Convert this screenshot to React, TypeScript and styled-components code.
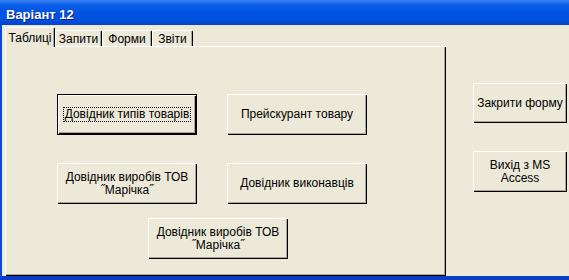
import React from "react";
import styled, { createGlobalStyle } from "styled-components";

const Global = createGlobalStyle`
  html, body { margin: 0; padding: 0; background: #ece9d8; }
  * { box-sizing: border-box; }
`;

const Window = styled.div`
  width: 569px;
  height: 280px;
  display: flex;
  flex-direction: column;
  overflow: hidden;
  font-family: "Liberation Sans", Arial, sans-serif;
  font-size: 12px;
  color: #000;
`;

const TitleBar = styled.div`
  height: 25px;
  flex: none;
  display: flex;
  align-items: center;
  padding: 4px 0 0 6px;
  background: linear-gradient(#3b83f5 0%, #0a5fe8 20%, #0054e3 50%, #0050dd 80%, #0043c8 100%);
  color: #fff;
  font-family: "Liberation Sans", Arial, sans-serif;
  font-weight: bold;
  font-size: 13px;
  text-shadow: 1px 1px #0a1e8c;
`;

const Frame = styled.div`
  flex: 1;
  display: flex;
  background: #ece9d8;
  border-left: 2px solid #0b48d8;
  border-bottom: 4px solid #0a3cc8;
  min-height: 0;
`;

const LeftPane = styled.div`
  display: flex;
  flex-direction: column;
  padding: 2px 0 0 3px;
`;

const TabStrip = styled.div`
  display: flex;
  align-items: flex-end;
  height: 19px;
`;

const Tab = styled.div<{ $active?: boolean; $w: number }>`
  position: relative;
  z-index: ${(p) => (p.$active ? 2 : 1)};
  width: ${(p) => p.$w}px;
  height: ${(p) => (p.$active ? 20 : 16)}px;
  margin-bottom: ${(p) => (p.$active ? -1 : 0)}px;
  padding-top: ${(p) => (p.$active ? 1 : 0)}px;
  display: flex;
  align-items: center;
  justify-content: center;
  background: #ece9d8;
  border-top: 1px solid #fff;
  border-left: 1px solid #fff;
  border-right: 1px solid #000;
  box-shadow: inset -1px 0 #aca899;
  border-radius: 2px 2px 0 0;
`;

const Panel = styled.div`
  width: 441px;
  flex: 1;
  display: flex;
  flex-direction: column;
  gap: 28px;
  padding: 48px 0 0 52px;
  box-shadow: inset 1px 1px #fff, inset -1px -1px #000, inset -2px -2px #aca899;
`;

const Row = styled.div<{ $indent?: number; $gap?: number }>`
  display: flex;
  gap: 30px;
  margin-left: ${(p) => p.$indent ?? 0}px;
  margin-top: ${(p) => p.$gap ?? 0}px;
`;

const Button = styled.div<{ $default?: boolean; $w?: number; $h?: number }>`
  width: ${(p) => p.$w ?? 140}px;
  height: ${(p) => p.$h ?? 41}px;
  display: flex;
  align-items: center;
  justify-content: center;
  text-align: center;
  line-height: 13px;
  background: #ece9d8;
  border: ${(p) => (p.$default ? "1px solid #000" : "none")};
  box-shadow: inset 1px 1px #fff, inset -1px -1px #000, inset -2px -2px #aca899;
`;

const Focus = styled.span`
  outline: 1px dotted #000;
  padding: 0 1px;
  line-height: 13px;
`;

const RightPane = styled.div`
  display: flex;
  flex-direction: column;
  gap: 28px;
  padding: 58px 0 0 27px;
`;

export default function App() {
  return (
    <>
      <Global />
      <Window>
        <TitleBar>Варіант 12</TitleBar>
        <Frame>
          <LeftPane>
            <TabStrip>
              <Tab $active $w={50}>Таблиці</Tab>
              <Tab $w={47}>Запити</Tab>
              <Tab $w={50}>Форми</Tab>
              <Tab $w={41}>Звіти</Tab>
            </TabStrip>
            <Panel>
              <Row>
                <Button $default>
                  <Focus>Довідник типів товарів</Focus>
                </Button>
                <Button>Прейскурант товару</Button>
              </Row>
              <Row>
                <Button>
                  Довідник виробів ТОВ
                  <br />
                  ˝Марічка˝
                </Button>
                <Button>Довідник виконавців</Button>
              </Row>
              <Row $indent={91} $gap={-14}>
                <Button>
                  Довідник виробів ТОВ
                  <br />
                  ˝Марічка˝
                </Button>
              </Row>
            </Panel>
          </LeftPane>
          <RightPane>
            <Button $w={94} $h={40}>Закрити форму</Button>
            <Button $w={94} $h={41}>
              Вихід з MS
              <br />
              Access
            </Button>
          </RightPane>
        </Frame>
      </Window>
    </>
  );
}
